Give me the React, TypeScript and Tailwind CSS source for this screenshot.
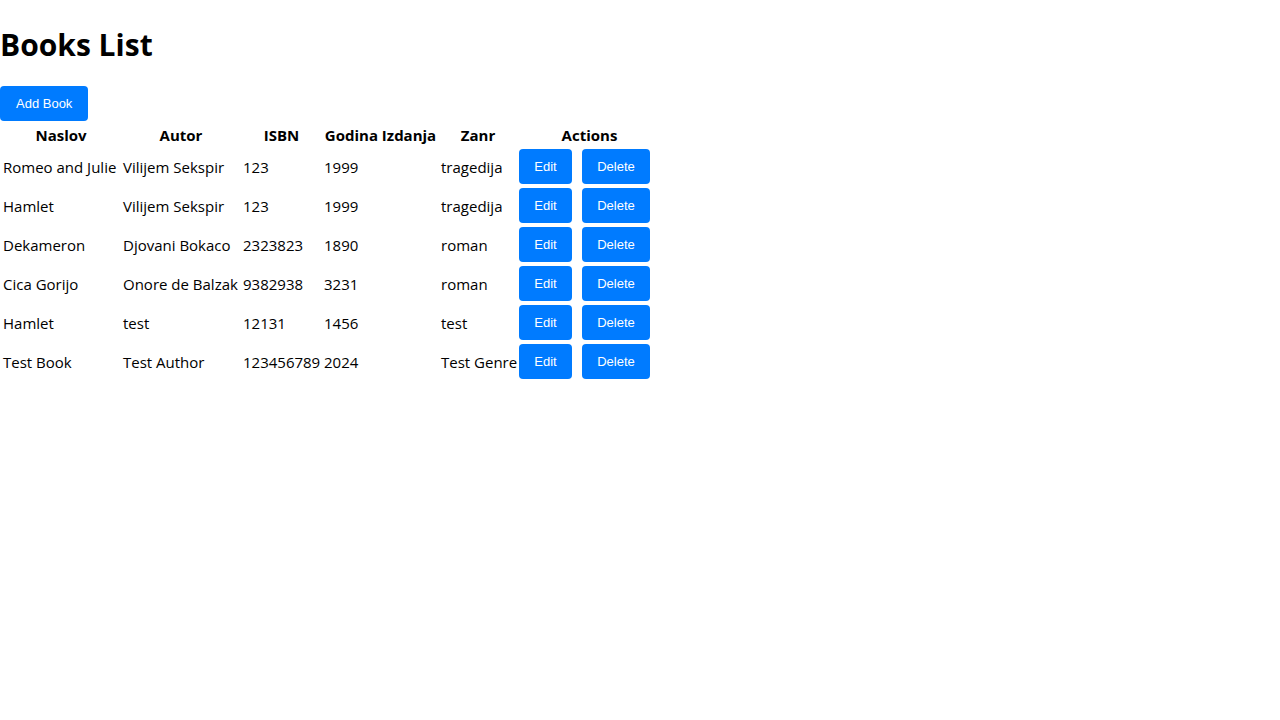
import React from "react";

type Book = { title: string; author: string; isbn: string; year: number; genre: string };

const books: Book[] = [
  { title: "Romeo and Julie", author: "Vilijem Sekspir", isbn: "123", year: 1999, genre: "tragedija" },
  { title: "Hamlet", author: "Vilijem Sekspir", isbn: "123", year: 1999, genre: "tragedija" },
  { title: "Dekameron", author: "Djovani Bokaco", isbn: "2323823", year: 1890, genre: "roman" },
  { title: "Cica Gorijo", author: "Onore de Balzak", isbn: "9382938", year: 3231, genre: "roman" },
  { title: "Hamlet", author: "test", isbn: "12131", year: 1456, genre: "test" },
  { title: "Test Book", author: "Test Author", isbn: "123456789", year: 2024, genre: "Test Genre" },
];

const columns = [
  { label: "Naslov", width: "w-[118px]" },
  { label: "Autor", width: "w-[118px]" },
  { label: "ISBN", width: "w-[79px]" },
  { label: "Godina Izdanja", width: "w-[115px]" },
  { label: "Zanr", width: "w-[76px]" },
  { label: "Actions", width: "w-[143px]" },
];

function Button({ children, className = "" }: { children: React.ReactNode; className?: string }) {
  return (
    <button
      type="button"
      className={`cursor-pointer rounded bg-[#007bff] py-2.5 text-center align-middle font-['Liberation_Sans',Arial,sans-serif] text-[13px] leading-[15px] text-white hover:bg-[#0056b3] ${className}`}
    >
      {children}
    </button>
  );
}

function Cell({ children }: { children: React.ReactNode }) {
  return <td className="px-px pt-[3px] pb-px whitespace-nowrap">{children}</td>;
}

export default function App() {
  return (
    <main className="font-['Open_Sans','Noto_Sans',sans-serif] text-[15px] leading-[21px] text-black">
      <h1 className="pt-[23px] pb-5 text-[30px] leading-[43px] font-bold">Books List</h1>
      <Button className="px-4">Add Book</Button>
      <table className="w-px table-fixed border-separate border-spacing-[2px]">
        <thead>
          <tr>
            {columns.map((c) => (
              <th key={c.label} scope="col" className={`px-px pt-0.5 text-center font-bold whitespace-nowrap ${c.width}`}>
                {c.label}
              </th>
            ))}
          </tr>
        </thead>
        <tbody>
          {books.map((b, i) => (
            <tr key={i}>
              <Cell>{b.title}</Cell>
              <Cell>{b.author}</Cell>
              <Cell>{b.isbn}</Cell>
              <Cell>{b.year}</Cell>
              <Cell>{b.genre}</Cell>
              <td className="p-px">
                <div className="flex gap-2.5">
                  <Button className="min-w-[53px] px-[15px]">Edit</Button>
                  <Button className="min-w-[68px] px-[15px]">Delete</Button>
                </div>
              </td>
            </tr>
          ))}
        </tbody>
      </table>
    </main>
  );
}
